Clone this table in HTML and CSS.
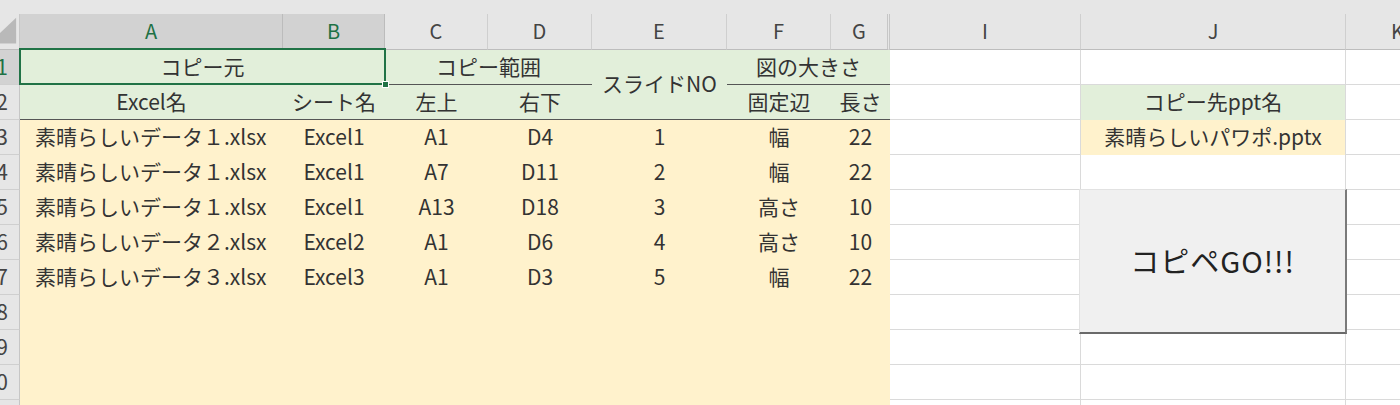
FILE: index.html
```html
<!DOCTYPE html>
<html lang="ja">
<head>
<meta charset="utf-8">
<title>コピペ</title>
<link rel="stylesheet" href="styles.css">
</head>
<body>
<div class="app">
  <div class="topbar"></div>
  <div class="sheet">
    <!-- column headers -->
    <div class="c corner"><svg width="20" height="35" viewBox="0 0 20 35"><polygon points="17,3 17,30 0,30 0,19" fill="#b9b9b9"/></svg></div>
    <div class="c hd sel">A</div>
    <div class="c hd sel">B</div>
    <div class="c hd">C</div>
    <div class="c hd">D</div>
    <div class="c hd">E</div>
    <div class="c hd">F</div>
    <div class="c hd hd-hidden">G</div>
    <div class="c hd">I</div>
    <div class="c hd">J</div>
    <div class="c hd">K</div>

    <!-- row 1 -->
    <div class="c rh rh-sel">1</div>
    <div class="c g bb span2 active">コピー元<div class="selbox"><div class="handle"></div></div></div>
    <div class="c g bb span2">コピー範囲</div>
    <div class="c g bb rows2">スライドNO</div>
    <div class="c g bb span2">図の大きさ</div>
    <div class="c w"></div>
    <div class="c w"></div>
    <div class="c w"></div>

    <!-- row 2 -->
    <div class="c rh">2</div>
    <div class="c g bb">Excel名</div>
    <div class="c g bb">シート名</div>
    <div class="c g bb">左上</div>
    <div class="c g bb">右下</div>
    <div class="c g bb">固定辺</div>
    <div class="c g bb">長さ</div>
    <div class="c w"></div>
    <div class="c g jcell">コピー先ppt名</div>
    <div class="c w"></div>

    <!-- row 3 -->
    <div class="c rh">3</div>
    <div class="c y left">素晴らしいデータ１.xlsx</div>
    <div class="c y">Excel1</div>
    <div class="c y">A1</div>
    <div class="c y">D4</div>
    <div class="c y">1</div>
    <div class="c y">幅</div>
    <div class="c y">22</div>
    <div class="c w"></div>
    <div class="c y jcell">素晴らしいパワポ.pptx</div>
    <div class="c w"></div>

    <!-- row 4 -->
    <div class="c rh">4</div>
    <div class="c y left">素晴らしいデータ１.xlsx</div>
    <div class="c y">Excel1</div>
    <div class="c y">A7</div>
    <div class="c y">D11</div>
    <div class="c y">2</div>
    <div class="c y">幅</div>
    <div class="c y">22</div>
    <div class="c w"></div>
    <div class="c w"></div>
    <div class="c w"></div>

    <!-- row 5 -->
    <div class="c rh">5</div>
    <div class="c y left">素晴らしいデータ１.xlsx</div>
    <div class="c y">Excel1</div>
    <div class="c y">A13</div>
    <div class="c y">D18</div>
    <div class="c y">3</div>
    <div class="c y">高さ</div>
    <div class="c y">10</div>
    <div class="c w"></div>
    <div class="c w"></div>
    <div class="c w"></div>

    <!-- row 6 -->
    <div class="c rh">6</div>
    <div class="c y left">素晴らしいデータ２.xlsx</div>
    <div class="c y">Excel2</div>
    <div class="c y">A1</div>
    <div class="c y">D6</div>
    <div class="c y">4</div>
    <div class="c y">高さ</div>
    <div class="c y">10</div>
    <div class="c w"></div>
    <div class="c w"></div>
    <div class="c w"></div>

    <!-- row 7 -->
    <div class="c rh">7</div>
    <div class="c y left">素晴らしいデータ３.xlsx</div>
    <div class="c y">Excel3</div>
    <div class="c y">A1</div>
    <div class="c y">D3</div>
    <div class="c y">5</div>
    <div class="c y">幅</div>
    <div class="c y">22</div>
    <div class="c w"></div>
    <div class="c w"></div>
    <div class="c w"></div>

    <!-- row 8 -->
    <div class="c rh">8</div>
    <div class="c y span7"></div>
    <div class="c w"></div>
    <div class="c w"></div>
    <div class="c w"></div>

    <!-- row 9 -->
    <div class="c rh">9</div>
    <div class="c y span7"></div>
    <div class="c w"></div>
    <div class="c w"></div>
    <div class="c w"></div>

    <!-- row 10 -->
    <div class="c rh">10</div>
    <div class="c y span7"></div>
    <div class="c w"></div>
    <div class="c w"></div>
    <div class="c w"></div>

    <!-- row 11 -->
    <div class="c rh">11</div>
    <div class="c y span7"></div>
    <div class="c w"></div>
    <div class="c w"></div>
    <div class="c w"></div>
  </div>
  <div class="shape">コピペGO!!!</div>
</div>
</body>
</html>
```

FILE: styles.css
```css
html, body {
  margin: 0;
  padding: 0;
}

body {
  width: 1400px;
  height: 405px;
  overflow: hidden;
  background: #ffffff;
  font-family: "Noto Sans CJK JP", "Noto Sans", sans-serif;
}

.app {
  position: relative;
  width: 1400px;
  height: 405px;
  overflow: hidden;
}

.topbar {
  height: 14px;
  background: #e6e6e6;
}

.sheet {
  display: grid;
  grid-template-columns: 20px 263px 102px 103px 104px 135px 104px 59px 191px 265px 104px;
  grid-template-rows: 36px;
  grid-auto-rows: 35px;
  width: 1450px;
}

.c {
  box-sizing: border-box;
  display: flex;
  align-items: center;
  justify-content: center;
  font-size: 21px;
  line-height: 1;
  color: #333333;
  white-space: nowrap;
  overflow: hidden;
  padding-bottom: 2px;
}

.corner {
  background: #e6e6e6;
  border-right: 1px solid #c8c8c8;
  border-bottom: 1px solid #bdbdbd;
  align-items: stretch;
  justify-content: flex-start;
  padding-bottom: 0;
}

.corner svg {
  display: block;
}

.hd {
  background: #e6e6e6;
  border-right: 1px solid #cfcfcf;
  border-bottom: 1px solid #bdbdbd;
  color: #444444;
  font-size: 20px;
}

.hd.sel {
  background: #d2d2d2;
  color: #1e7145;
  border-right-color: #bcbcbc;
}

.hd-hidden {
  border-right: 3px double #c6c6c6;
}

.rh {
  background: #e6e6e6;
  border-right: 1px solid #c6c6c6;
  border-bottom: 1px solid #cfcfcf;
  justify-content: flex-end;
  padding-right: 11px;
  font-size: 21px;
  color: #444444;
}

.rh-sel {
  background: #d2d2d2;
  color: #1e7145;
}

.g {
  background: #e2efda;
}

.y {
  background: #fff2cc;
}

.w {
  background: #ffffff;
  border-right: 1px solid #dadada;
  border-bottom: 1px solid #dadada;
}

.jcell {
  border-right: 1px solid #dadada;
}

.bb {
  border-bottom: 1px solid #555555;
}

.left {
  justify-content: flex-start;
  padding-left: 15px;
}

.span2 {
  grid-column: span 2;
}

.span7 {
  grid-column: span 7;
}

.rows2 {
  grid-row: span 2;
}

.active {
  position: relative;
  overflow: visible;
}

.selbox {
  position: absolute;
  left: -1px;
  top: -2px;
  right: -1px;
  bottom: -1px;
  border: 2px solid #217346;
  z-index: 2;
}

.handle {
  position: absolute;
  right: -5px;
  bottom: -5px;
  width: 5px;
  height: 5px;
  background: #217346;
  border: 1px solid #ffffff;
}

.shape {
  position: absolute;
  left: 1079px;
  top: 189px;
  width: 268px;
  height: 145px;
  box-sizing: border-box;
  background: #f0f0f0;
  border-top: 1px solid #e2e2e2;
  border-left: 1px solid #e2e2e2;
  border-right: 2px solid #7a7a7a;
  border-bottom: 2px solid #6a6a6a;
  display: flex;
  align-items: center;
  justify-content: center;
  font-size: 29px;
  letter-spacing: 1px;
  color: #222222;
  z-index: 3;
  padding-bottom: 2px;
}
```
